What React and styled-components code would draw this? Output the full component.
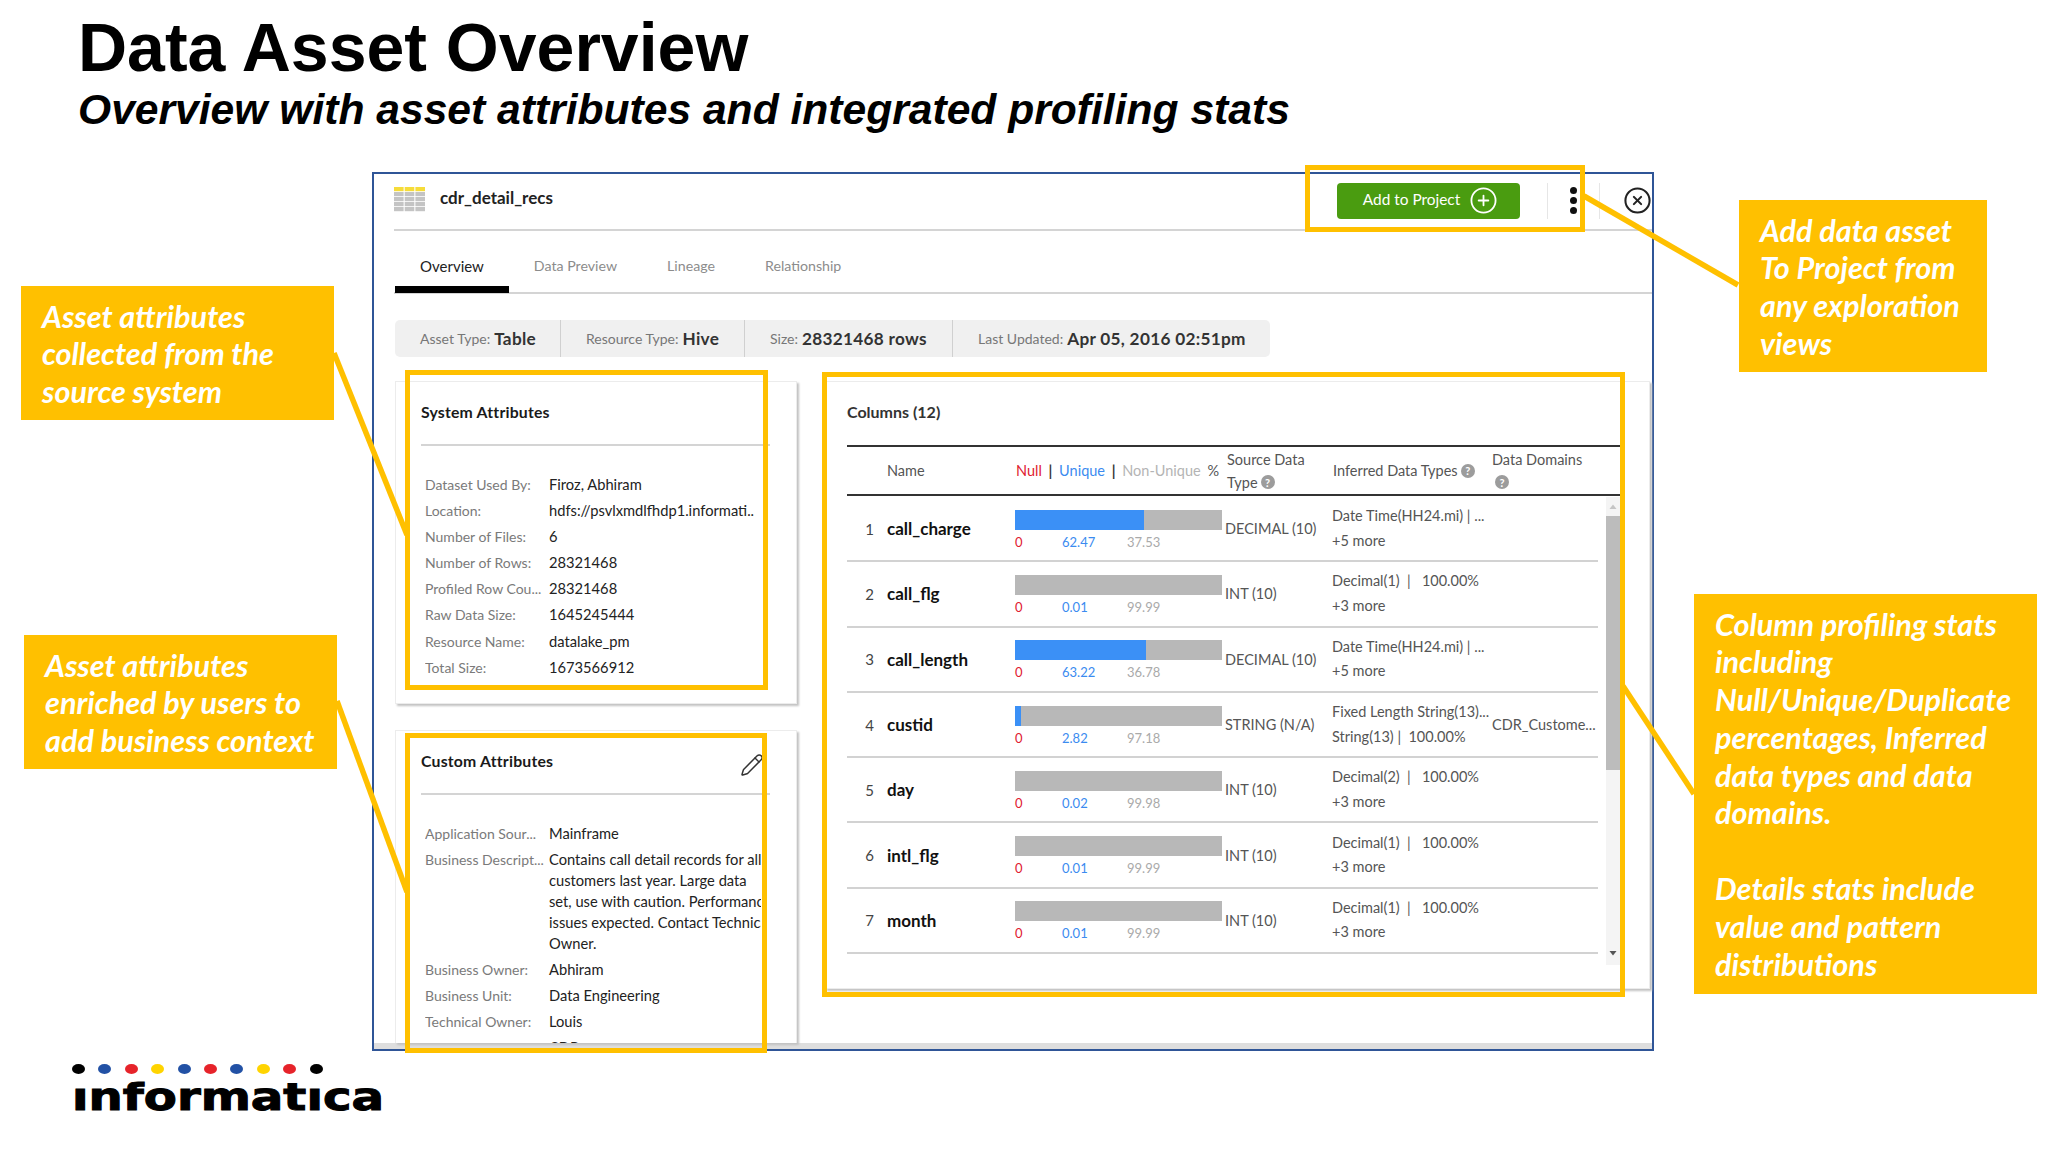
import React from "react";
import styled, { createGlobalStyle } from "styled-components";
import { CirclePlus, CircleX, Pencil } from "lucide-react";

const Global = createGlobalStyle`
  html, body { margin: 0; padding: 0; background: #fff; }
  * { box-sizing: border-box; }
`;
const YELLOW = "#FFC000";
const UI = `Lato, "Open Sans", sans-serif`;

const Slide = styled.div`
  position: relative; width: 2048px; height: 1152px; overflow: hidden; background: #fff;
  font-family: "Liberation Sans", Arial, sans-serif;
`;
const Heading = styled.header`
  height: 172px; padding: 11px 0 0 78px;
`;
const Title = styled.h1`
  margin: 0; font-size: 68px; line-height: 72px; font-weight: 700; color: #000;
`;
const Subtitle = styled.h2`
  margin: 0; font-size: 42.6px; line-height: 52px; font-weight: 700; font-style: italic; color: #000;
`;
const Body = styled.main`
  display: grid; grid-template-columns: 372px 1282px 1fr; height: 880px;
`;
const Side = styled.aside`
  display: flex; flex-direction: column; align-items: flex-start;
`;
const Callout = styled.div`
  margin: ${p => p.$top}px 0 0 ${p => p.$left}px;
  width: ${p => p.$w}px; height: ${p => p.$h}px;
  padding: 11.5px 5px 0 21px; background: ${YELLOW}; color: #fff;
  font-family: Lato, "Open Sans", sans-serif; font-weight: 700; font-style: italic;
  font-size: 30.6px; line-height: 37.8px; white-space: nowrap;
  p { margin: 0 0 37.8px; }
`;
const Window = styled.section`
  position: relative; display: flex; flex-direction: column; height: 879px;
  border: 2px solid #2f5597; background: #fff; font-family: ${UI};
`;
const TopBar = styled.div`
  position: relative; display: flex; align-items: center; height: 57px; margin-left: 20px;
  border-bottom: 2px solid #d4d4d4;
`;
const Lead = styled.div`
  display: flex; align-items: center; margin-bottom: 5px;
`;
const AssetName = styled.span`
  margin: 0 0 3px 15px; font-size: 17px; font-weight: 700; color: #222;
`;
const TopActions = styled.div`
  display: flex; align-items: center; margin-left: auto; height: 100%; padding-bottom: 2px;
`;
const AddButton = styled.button`
  display: flex; align-items: center; justify-content: center; gap: 9px;
  width: 183px; height: 36px; border: 0; border-radius: 4px; background: #4a9c10; color: #fff;
  font-family: ${UI}; font-size: 15.4px; font-weight: 400; padding: 0 0 3px 4px;
  svg { margin-top: 2px; }
`;
const VRule = styled.span`
  display: block; width: 1px; height: 36px; background: #e6e6e6;
  margin-left: ${p => p.$ml}px;
`;
const Dots = styled.span`
  display: flex; flex-direction: column; gap: 3px; margin-left: 22px;
  i { display: block; width: 7px; height: 7px; border-radius: 50%; background: #111; }
`;
const Close = styled.span`
  display: flex; margin: 0 0 0 23px; color: #222;
`;
const HighlightFrame = styled.div`
  position: absolute; pointer-events: none; border: 5px solid ${YELLOW};
  left: ${p => p.$l}px; top: ${p => p.$t}px; width: ${p => p.$w}px; height: ${p => p.$h}px;
`;
const Tabs = styled.nav`
  display: flex; align-items: flex-end; height: 63px; margin-left: 20px; border-bottom: 2px solid #d4d4d4;
`;
const Tab = styled.span`
  display: block; padding: 0 25px 10px; margin-bottom: -1px;
  margin-left: ${p => p.$first ? 1 : 0}px;
  border-bottom: 7px solid ${p => p.$active ? "#000" : "transparent"};
  font-size: ${p => p.$active ? 15 : 14.2}px; line-height: 20px; color: ${p => p.$active ? "#222" : "#8c8c8c"};
`;
const Facts = styled.div`
  display: grid; grid-template-columns: 165px 184px 208px 318px; height: 37px; margin: 26px 0 0 21px; width: 875px;
  background: #f0f0f0; border-radius: 5px; font-size: 14px; color: #777;
`;
const Fact = styled.div`
  display: flex; align-items: center; gap: 4px; padding-left: 25px;
  border-left: ${p => p.$first ? 0 : "1px solid #d0d0d0"};
  b { font-size: 17.2px; font-weight: 700; color: #333; letter-spacing: .3px; }
`;
const Panels = styled.div`
  display: grid; grid-template-columns: 402px 825px; gap: 28px; margin: 24px 0 0 21px; flex: 1; min-height: 0;
`;
const LeftStack = styled.div`
  display: flex; flex-direction: column; gap: 26px; min-height: 0;
`;
const Card = styled.div`
  position: relative; height: ${p => p.$h}px; background: #fff; border: 1px solid #ececec;
  border-bottom: ${p => p.$open ? 0 : "1px solid #ececec"};
  box-shadow: 2px 2px 2px #c2c2c2;
`;
const CardTitle = styled.div`
  display: flex; align-items: center; justify-content: space-between;
  height: 64px; margin-left: 25px; width: 349px; padding: 0 0 3px;
  border-bottom: 2px solid #d4d4d4; font-size: 15.8px; font-weight: 700; color: #1a1a1a; letter-spacing: .2px;
  svg { color: #333; margin: 8px 6px 0 0; }
`;
const AttrList = styled.dl`
  margin: 28px 0 0 29px; width: 336px; height: ${p => p.$clip}px; overflow: hidden;
  display: grid; grid-template-columns: 124px 212px; align-content: start; row-gap: 5.1px; line-height: 21px;
`;
const AttrLabel = styled.dt`
  color: #7a7a7a; white-space: nowrap; overflow: hidden; font-size: 14px;
`;
const AttrValue = styled.dd`
  margin: 0; color: #222; white-space: nowrap; font-size: 14.7px;
`;
const Columns = styled(Card)`
  padding: 0 0 0 21px;
`;
const ColumnsTitle = styled.div`
  height: 63px; padding-top: 20px; font-size: 16px; font-weight: 700; color: #333; line-height: 20px;
`;
const grid = `display: grid; grid-template-columns: 40px 128px 210px 107px 160px 106px; align-items: center;`;
const Head = styled.div`
  ${grid} width: 773px; height: 51px; border-top: 2px solid #333; border-bottom: 2px solid #333;
  font-size: 14.5px; line-height: 23px; color: #555;
`;
const HeadCell = styled.div`
  grid-column: ${p => p.$col}; padding-left: ${p => p.$pl || 0}px; white-space: nowrap;
  word-spacing: ${p => p.$ws || 0}px;
`;
const Help = styled.span`
  display: inline-flex; align-items: center; justify-content: center; width: 14px; height: 14px;
  margin-left: 3px; border-radius: 50%; background: #9c9c9c; color: #fff; font-size: 11px; font-weight: 700; line-height: 1;
  vertical-align: 1px;
`;
const TableBody = styled.div`
  display: grid; grid-template-columns: 751px 22px; width: 773px; padding-top: 1px;
`;
const RowLine = styled.div`
  ${grid} height: 65.3px; border-bottom: 2px solid #d2d2d2; font-size: 14.5px; color: #555;
`;
const Num = styled.div`
  padding-right: 13px; text-align: right; font-size: 15px; color: #444;
`;
const Name = styled.div`
  font-size: 17px; font-weight: 700; color: #111;
`;
const BarCell = styled.div`
  display: flex; flex-direction: column; width: 207px; padding-top: 3px;
`;
const Bar = styled.div`
  display: flex; height: 20px; background: #b8b8b8; overflow: hidden;
`;
const BarFill = styled.div`
  background: #3b90f6;
`;
const Nums = styled.div`
  display: grid; grid-template-columns: 47px 65px 1fr; margin-top: 4px; font-size: 13px; line-height: 17px;
`;
const Stat = styled.span`
  color: ${p => p.$c};
`;
const Sep = styled.span`
  color: #333; font-weight: 700;
`;
const Inferred = styled.div`
  line-height: 24.5px; white-space: nowrap;
`;
const Scroll = styled.div`
  display: flex; flex-direction: column; width: 14px; height: 468px; margin-left: 8px; background: #f4f4f4;
`;
const Arrow = styled.svg`
  display: block; width: 14px; height: 14px; flex: none; margin: ${p => p.$m};
`;
const Thumb = styled.div`
  height: 254px; background: #bcbcbc;
`;
const ScrollGap = styled.div`
  flex: 1;
`;
const BottomStrip = styled.div`
  height: 6px; background: #dedede; flex: none;
`;
const Footer = styled.footer`
  display: flex; flex-direction: column; padding: 12px 0 0 72px;
`;
const LogoDots = styled.div`
  display: flex; gap: 13.4px;
`;
const LogoDot = styled.span`
  display: block; width: 13px; height: 10px; border-radius: 50%; background: ${p => p.$c};
`;
const Wordmark = styled.div`
  margin: 1px 0 0 0; font-family: "DejaVu Sans", sans-serif; font-weight: 700; font-size: 38px; line-height: 44px;
  color: #000; transform: scaleX(1.268); transform-origin: left center; white-space: nowrap; -webkit-text-stroke: 1px #000;
`;
const Connectors = styled.svg`
  position: absolute; left: 0; top: 0; width: 2048px; height: 1152px; pointer-events: none;
`;

const sys = [
  ["Dataset Used By:", "Firoz, Abhiram"],
  ["Location:", "hdfs://psvlxmdlfhdp1.informati.."],
  ["Number of Files:", "6"],
  ["Number of Rows:", "28321468"],
  ["Profiled Row Cou...", "28321468"],
  ["Raw Data Size:", "1645245444"],
  ["Resource Name:", "datalake_pm"],
  ["Total Size:", "1673566912"],
];
const custom = [
  ["Application Sour...", "Mainframe"],
  ["Business Descript...", <>Contains call detail records for all<br />customers last year. Large data<br />set, use with caution. Performance<br />issues expected. Contact Technical<br />Owner.</>],
  ["Business Owner:", "Abhiram"],
  ["Business Unit:", "Data Engineering"],
  ["Technical Owner:", "Louis"],
  ["Resource Type:", "CDR"],
];
const wide = "\u00a0\u00a0|\u00a0\u00a0\u00a0100.00%";
const tight = "\u00a0|\u00a0\u00a0100.00%";
const rows = [
  [1, "call_charge", 62.47, "37.53", "62.47", "DECIMAL (10)", "Date Time(HH24.mi) | ...", "+5 more", ""],
  [2, "call_flg", 0.01, "99.99", "0.01", "INT (10)", "Decimal(1)" + wide, "+3 more", ""],
  [3, "call_length", 63.22, "36.78", "63.22", "DECIMAL (10)", "Date Time(HH24.mi) | ...", "+5 more", ""],
  [4, "custid", 2.82, "97.18", "2.82", "STRING (N/A)", "Fixed Length String(13)...", "String(13)" + tight, "CDR_Custome..."],
  [5, "day", 0.02, "99.98", "0.02", "INT (10)", "Decimal(2)" + wide, "+3 more", ""],
  [6, "intl_flg", 0.01, "99.99", "0.01", "INT (10)", "Decimal(1)" + wide, "+3 more", ""],
  [7, "month", 0.01, "99.99", "0.01", "INT (10)", "Decimal(1)" + wide, "+3 more", ""],
];
const dots = ["#000", "#2251a5", "#e6232a", "#ffd400", "#2251a5", "#e6232a", "#2251a5", "#ffd400", "#e6232a", "#000"];

const TableIcon = () => (
  <svg width="31" height="25" viewBox="0 0 31 25">
    {[0, 10.7, 21.4].map(x => [0, 5, 10, 15, 20].map((y, i) => (
      <rect key={x + "-" + y} x={x} y={y} width="9.6" height="4.2" fill={i === 0 ? "#f6dc3a" : "#c4c4c4"} />
    )))}
  </svg>
);

export default function App() {
  return (
    <Slide>
      <Global />
      <Heading>
        <Title>Data Asset Overview</Title>
        <Subtitle>Overview with asset attributes and integrated profiling stats</Subtitle>
      </Heading>
      <Body>
        <Side>
          <Callout $top={114} $left={21} $w={313} $h={134}>Asset attributes<br />collected from the<br />source system</Callout>
          <Callout $top={215} $left={24} $w={313} $h={134}>Asset attributes<br />enriched by users to<br />add business context</Callout>
        </Side>
        <Window>
          <TopBar>
            <Lead>
              <TableIcon />
              <AssetName>cdr_detail_recs</AssetName>
            </Lead>
            <TopActions>
              <AddButton>Add to Project <CirclePlus size={29} strokeWidth={1.5} /></AddButton>
              <VRule $ml={27} />
              <Dots><i /><i /><i /></Dots>
              <VRule $ml={22} />
              <Close><CircleX size={29} strokeWidth={1.7} /></Close>
            </TopActions>
            <HighlightFrame $l={911} $t={-9} $w={280} $h={67} />
          </TopBar>
          <Tabs>
            <Tab $first $active>Overview</Tab>
            <Tab>Data Preview</Tab>
            <Tab>Lineage</Tab>
            <Tab>Relationship</Tab>
          </Tabs>
          <Facts>
            <Fact $first>Asset Type: <b>Table</b></Fact>
            <Fact>Resource Type: <b>Hive</b></Fact>
            <Fact>Size: <b>28321468 rows</b></Fact>
            <Fact>Last Updated: <b>Apr 05, 2016 02:51pm</b></Fact>
          </Facts>
          <Panels>
            <LeftStack>
              <Card $h={323}>
                <CardTitle>System Attributes</CardTitle>
                <AttrList $clip={210}>
                  {sys.map(([k, v]) => (
                    <React.Fragment key={k}>
                      <AttrLabel>{k}</AttrLabel>
                      <AttrValue>{v}</AttrValue>
                    </React.Fragment>
                  ))}
                </AttrList>
                <HighlightFrame $l={9} $t={-12} $w={363} $h={320} />
              </Card>
              <Card $h={313} $open>
                <CardTitle>Custom Attributes <Pencil size={24} strokeWidth={1.5} /></CardTitle>
                <AttrList $clip={220}>
                  {custom.map(([k, v]) => (
                    <React.Fragment key={k}>
                      <AttrLabel>{k}</AttrLabel>
                      <AttrValue>{v}</AttrValue>
                    </React.Fragment>
                  ))}
                </AttrList>
                <HighlightFrame $l={9} $t={2} $w={362} $h={320} />
              </Card>
            </LeftStack>
            <Columns $h={608}>
              <ColumnsTitle>Columns (12)</ColumnsTitle>
              <Head>
                <HeadCell $col={2}>Name</HeadCell>
                <HeadCell $col={3} $pl={1} $ws={3}>
                  <Stat $c="#e0202f">Null</Stat> <Sep>|</Sep> <Stat $c="#3b8bf0">Unique</Stat> <Sep>|</Sep> <Stat $c="#b4b4b4">Non-Unique</Stat> %
                </HeadCell>
                <HeadCell $col={4} $pl={2}>Source Data<br />Type<Help>?</Help></HeadCell>
                <HeadCell $col={5} $pl={1}>Inferred Data Types<Help>?</Help></HeadCell>
                <HeadCell $col={6}>Data Domains<br /><Help>?</Help></HeadCell>
              </Head>
              <TableBody>
                <div>
                  {rows.map(r => (
                    <RowLine key={r[0]}>
                      <Num>{r[0]}</Num>
                      <Name>{r[1]}</Name>
                      <BarCell>
                        <Bar><BarFill style={{ width: `${r[2] >= 1 ? r[2] : 0}%` }} /></Bar>
                        <Nums>
                          <Stat $c="#e0202f">0</Stat>
                          <Stat $c="#3b8bf0">{r[4]}</Stat>
                          <Stat $c="#aaa">{r[3]}</Stat>
                        </Nums>
                      </BarCell>
                      <div>{r[5]}</div>
                      <Inferred>{r[6]}<br />{r[7]}</Inferred>
                      <div>{r[8]}</div>
                    </RowLine>
                  ))}
                </div>
                <Scroll>
                  <Arrow $m="3px 0 2px" viewBox="0 0 14 14"><path d="M3.5 9 L7 4.5 L10.5 9 Z" fill="#c4c4c4" /></Arrow>
                  <Thumb />
                  <ScrollGap />
                  <Arrow $m="0 0 5px" viewBox="0 0 14 14"><path d="M3.5 5 L7 9.5 L10.5 5 Z" fill="#555" /></Arrow>
                </Scroll>
              </TableBody>
              <HighlightFrame $l={-4} $t={-10} $w={803} $h={625} />
            </Columns>
          </Panels>
          <BottomStrip />
        </Window>
        <Side>
          <Callout $top={28} $left={85} $w={248} $h={172}>Add data asset<br />To Project from<br />any exploration<br />views</Callout>
          <Callout $top={222} $left={40} $w={343} $h={400}>
            <p>Column profiling stats<br />including<br />Null/Unique/Duplicate<br />percentages, Inferred<br />data types and data<br />domains.</p>
            Details stats include<br />value and pattern<br />distributions
          </Callout>
        </Side>
      </Body>
      <Footer aria-label="informatica">
        <LogoDots>{dots.map((c, i) => <LogoDot key={i} $c={c} />)}</LogoDots>
        <Wordmark>ınformatıca</Wordmark>
      </Footer>
      <Connectors viewBox="0 0 2048 1152">
        <g stroke={YELLOW} strokeWidth="5.5" fill="none">
          <line x1="334" y1="353" x2="407" y2="535" />
          <line x1="337" y1="701" x2="407" y2="892" />
          <line x1="1584" y1="196" x2="1738" y2="285" />
          <line x1="1623" y1="686" x2="1694" y2="794" />
        </g>
      </Connectors>
    </Slide>
  );
}
